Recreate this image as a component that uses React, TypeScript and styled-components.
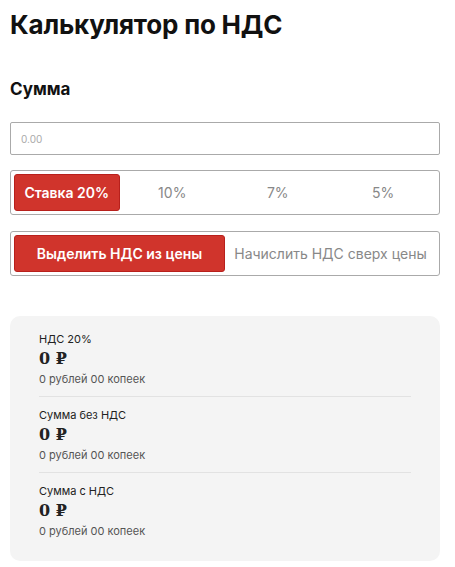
import React from 'react';
import styled, { createGlobalStyle } from 'styled-components';

const GlobalStyle = createGlobalStyle`
  body {
    margin: 0;
    background: #fff;
    font-family: Inter, "Noto Sans", sans-serif;
    color: #111;
  }
`;

const rates = ['Ставка 20%', '10%', '7%', '5%'];
const modes = ['Выделить НДС из цены', 'Начислить НДС сверх цены'];

const results = [
  { label: 'НДС 20%', value: '0 ₽', words: '0 рублей 00 копеек' },
  { label: 'Сумма без НДС', value: '0 ₽', words: '0 рублей 00 копеек' },
  { label: 'Сумма с НДС', value: '0 ₽', words: '0 рублей 00 копеек' },
];

const Page = styled.div`
  width: 430px;
  padding: 9px 15px 11px 10px;
  display: flex;
  flex-direction: column;
`;

const Title = styled.h1`
  margin: 0;
  font-size: 26px;
  font-weight: 700;
  line-height: 32px;
  letter-spacing: -0.2px;
`;

const Label = styled.h2`
  margin: 37px 0 0;
  font-size: 17px;
  font-weight: 700;
  line-height: 22px;
`;

const Input = styled.input`
  margin-top: 22px;
  height: 33px;
  box-sizing: border-box;
  border: 1px solid #aaa;
  border-radius: 2px;
  padding: 0 10px;
  font-family: inherit;
  font-size: 10px;
  outline: none;
  &::placeholder {
    color: #aaa;
  }
`;

const Group = styled.div<{ $cols: number; $top: number }>`
  margin-top: ${p => p.$top}px;
  height: 45px;
  box-sizing: border-box;
  border: 1px solid #aaa;
  border-radius: 3px;
  padding: 3px;
  display: grid;
  grid-template-columns: repeat(${p => p.$cols}, 1fr);
`;

const Option = styled.button<{ $active?: boolean }>`
  border: ${p => (p.$active ? '1px solid #b8201c' : 'none')};
  border-radius: 3px;
  background: ${p => (p.$active ? '#d0342c' : 'transparent')};
  color: ${p => (p.$active ? '#fff' : '#888')};
  font-family: inherit;
  font-size: 14px;
  font-weight: ${p => (p.$active ? 600 : 400)};
  padding: 0;
  cursor: pointer;
`;

const Panel = styled.div`
  margin-top: 40px;
  background: #f4f4f4;
  border-radius: 10px;
  padding: 16px 29px 23px;
  display: flex;
  flex-direction: column;
`;

const Result = styled.div`
  padding-bottom: 10px;
  border-bottom: 1px solid #e2e2e2;
  margin-bottom: 11px;
  &:last-child {
    border-bottom: none;
    margin-bottom: 0;
    padding-bottom: 0;
  }
`;

const ResultLabel = styled.div`
  font-size: 11px;
  line-height: 14px;
  color: #222;
`;

const ResultValue = styled.div`
  margin-top: 3px;
  font-family: "DejaVu Serif", serif;
  font-size: 16px;
  font-weight: 700;
  line-height: 20px;
  color: #222;
`;

const ResultWords = styled.div`
  margin-top: 3px;
  font-size: 11px;
  line-height: 14px;
  color: #555;
`;

export default function App() {
  return (
    <Page>
      <GlobalStyle />
      <Title>Калькулятор по НДС</Title>
      <Label>Сумма</Label>
      <Input placeholder="0.00" />
      <Group $cols={4} $top={15}>
        {rates.map((r, i) => (
          <Option key={r} $active={i === 0}>{r}</Option>
        ))}
      </Group>
      <Group $cols={2} $top={16}>
        {modes.map((m, i) => (
          <Option key={m} $active={i === 0}>{m}</Option>
        ))}
      </Group>
      <Panel>
        {results.map(r => (
          <Result key={r.label}>
            <ResultLabel>{r.label}</ResultLabel>
            <ResultValue>{r.value}</ResultValue>
            <ResultWords>{r.words}</ResultWords>
          </Result>
        ))}
      </Panel>
    </Page>
  );
}
